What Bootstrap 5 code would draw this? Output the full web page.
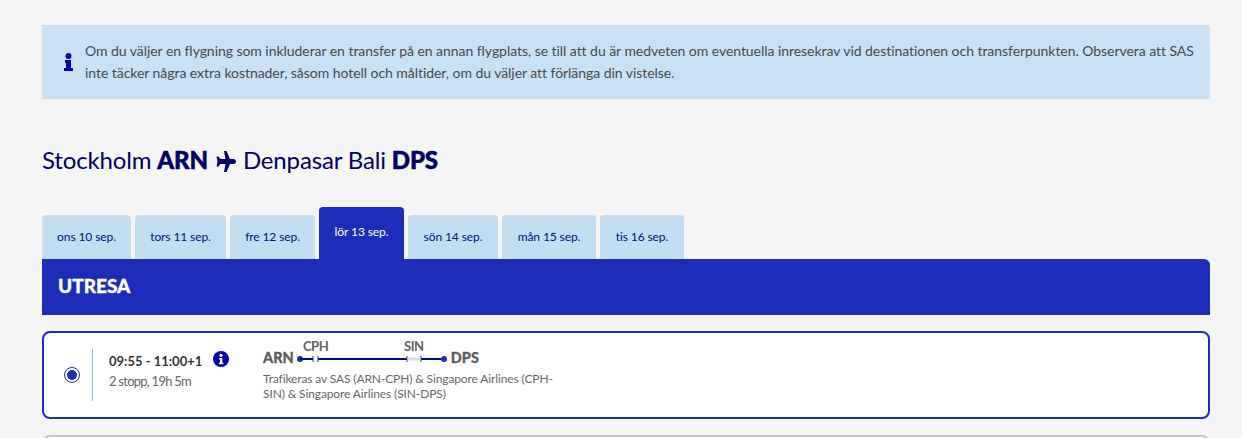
<!DOCTYPE html>
<html lang="sv">
<head>
  <meta charset="UTF-8" />
  <meta name="viewport" content="width=device-width, initial-scale=1.0"/>
  <title>Välj flyg</title>
  <link href="https://cdn.jsdelivr.net/npm/bootstrap@5.3.0/dist/css/bootstrap.min.css" rel="stylesheet"/>
  <style>
    html, body {
      height: 438px;
      overflow: hidden;
    }

    body {
      background: #f5f5f5;
      font-family: Lato, "Liberation Sans", sans-serif;
      color: #3f3f3f;
    }

    .page-wrap {
      padding: 25px 32px 0 42px;
    }

    .info-box {
      background: #c8e1f5;
      height: 74px;
      padding: 0 8px 0 22px;
      font-size: 14px;
      letter-spacing: -0.05px;
      line-height: 22px;
      color: #4a4a4a;
    }

    .info-icon {
      margin-right: 12px;
    }

    .route-title {
      margin: 47px 0 0;
      height: 30px;
      font-size: 24px;
      letter-spacing: -0.15px;
      line-height: 28px;
      font-weight: 400;
      color: #000066;
    }

    .route-title b {
      font-weight: 900;
      -webkit-text-stroke: 0.5px #000066;
    }

    .plane-icon {
      vertical-align: -3px;
      margin: 0 1px;
    }

    .day-tabs {
      margin-top: 31px;
      height: 52px;
      gap: 4px;
    }

    .day-tab {
      height: 44px;
      background: #c3def2;
      color: #000f80;
      font-size: 12px;
      letter-spacing: -0.1px;
      border-radius: 4px 4px 0 0;
    }

    .day-tab.is-active {
      height: 52px;
      background: #1c2db9;
      color: #fff;
      padding-bottom: 3px;
    }

    .tab-ons { width: 89px; }
    .tab-tors { width: 91px; }
    .tab-fre { width: 85px; }
    .tab-lor { width: 85px; }
    .tab-son { width: 90px; }
    .tab-man { width: 94px; }
    .tab-tis { width: 84px; }

    .trip-head {
      height: 56px;
      background: #1c2db9;
      color: #fff;
      padding-left: 16px;
      padding-bottom: 2px;
      font-size: 19px;
      font-weight: 900;
      -webkit-text-stroke: 0.3px #fff;
      border-radius: 0 6px 0 0;
    }

    .flight-box {
      height: 88px;
      margin-top: 16px;
      background: #fff;
      border: 2px solid #1c2db9;
      border-radius: 8px;
    }

    .flight-box.is-next {
      border-color: #c8c8c8;
    }

    .radio-cell {
      width: 49px;
      height: 52px;
      border-right: 1px solid #8fc1e3;
      padding-left: 20px;
    }

    .radio-ring {
      width: 16px;
      height: 16px;
      border: 1.5px solid #1c2db9;
      border-radius: 50%;
      padding: 2px;
    }

    .radio-ring span {
      display: block;
      width: 100%;
      height: 100%;
      background: #1c2db9;
      border-radius: 50%;
    }

    .time-cell {
      width: 170px;
      padding-left: 16px;
      padding-bottom: 8px;
    }

    .time-row {
      gap: 11px;
      height: 20px;
    }

    .time-icon {
      margin-top: -4px;
    }

    .time-line {
      font-size: 13px;
      font-weight: 700;
      color: #333;
      line-height: 20px;
    }

    .stop-line {
      font-size: 13px;
      letter-spacing: -0.75px;
      color: #666;
      line-height: 20px;
    }

    .route-cell {
      width: 300px;
      padding-bottom: 11px;
    }

    .airport {
      font-size: 14.5px;
      font-weight: 900;
      color: #5f5f5f;
      line-height: 18px;
      -webkit-text-stroke: 0.3px #5f5f5f;
    }

    .route-line {
      font-family: Lato, sans-serif;
      margin: 0 4px 0 3px;
    }

    .stop-code {
      font-size: 13px;
      font-weight: 700;
      letter-spacing: -0.5px;
      fill: #5f5f5f;
    }

    .operated {
      font-size: 12px;
      letter-spacing: -0.12px;
      line-height: 15px;
      color: #666;
    }
  </style>
</head>
<body>
  <div class="page-wrap">
    <div class="info-box d-flex align-items-center">
      <svg class="info-icon flex-shrink-0" width="9" height="18" viewBox="0 0 9 18"><circle cx="4.5" cy="3" r="3" fill="#0000a8"/><path d="M1 7h6v8h2v3H0v-3h2v-5H1z" fill="#0000a8"/></svg>
      <div>Om du väljer en flygning som inkluderar en transfer på en annan flygplats, se till att du är medveten om eventuella inresekrav vid destinationen och transferpunkten. Observera att SAS inte täcker några extra kostnader, såsom hotell och måltider, om du väljer att förlänga din vistelse.</div>
    </div>

    <h2 class="route-title">Stockholm <b>ARN</b> <svg class="plane-icon" width="21" height="21" viewBox="0 0 21 21"><path d="M9 0h2.500l3.500 8h3.500c1.400 0 2.500 1.100 2.500 2.500S19.900 13 18.500 13H15l-3.500 8H9l1.500-8H5.500l-2 2.500H1.500L2.500 10.500 1.500 5.500h2l2 2.500h5z" fill="#000066"/></svg> Denpasar Bali <b>DPS</b></h2>

    <div class="day-tabs d-flex align-items-end">
      <div class="day-tab tab-ons d-flex align-items-center justify-content-center">ons 10 sep.</div>
      <div class="day-tab tab-tors d-flex align-items-center justify-content-center">tors 11 sep.</div>
      <div class="day-tab tab-fre d-flex align-items-center justify-content-center">fre 12 sep.</div>
      <div class="day-tab tab-lor is-active d-flex align-items-center justify-content-center">lör 13 sep.</div>
      <div class="day-tab tab-son d-flex align-items-center justify-content-center">sön 14 sep.</div>
      <div class="day-tab tab-man d-flex align-items-center justify-content-center">mån 15 sep.</div>
      <div class="day-tab tab-tis d-flex align-items-center justify-content-center">tis 16 sep.</div>
    </div>

    <div class="trip-head d-flex align-items-center">UTRESA</div>

    <div class="flight-box d-flex align-items-center">
      <div class="radio-cell d-flex align-items-center flex-shrink-0"><div class="radio-ring"><span></span></div></div>
      <div class="time-cell flex-shrink-0">
        <div class="time-row d-flex align-items-center">
          <span class="time-line">09:55 - 11:00+1</span>
          <svg class="time-icon" width="16" height="16" viewBox="0 0 17 17"><circle cx="8.500" cy="8.500" r="8.500" fill="#0000a8"/><circle cx="8.500" cy="4.600" r="1.700" fill="#fff"/><path d="M6.500 7.400h3.400v5h1.100v1.600H6.200v-1.600h1.200V9H6.500z" fill="#fff"/></svg>
        </div>
        <div class="stop-line">2 stopp, 19h 5m</div>
      </div>
      <div class="route-cell flex-shrink-0">
        <div class="d-flex align-items-end">
          <span class="airport">ARN</span>
          <svg class="route-line" width="150" height="29" viewBox="0 0 150 29">
            <text class="stop-code" x="6" y="13">CPH</text>
            <text class="stop-code" x="107" y="13">SIN</text>
            <circle cx="3" cy="21" r="3" fill="#1c2db9"/>
            <path d="M3 21h13M21 21h89M124 21h23" stroke="#000f80" stroke-width="2"/>
            <path d="M16 18v6M21 18v6M110 18v6M124 18v6" stroke="#1c2db9"/>
            <path d="M110.500 21h13" stroke="#ddd" stroke-width="3"/>
            <circle cx="147" cy="21" r="3" fill="#1c2db9"/>
          </svg>
          <span class="airport">DPS</span>
        </div>
        <div class="operated mt-1">Trafikeras av SAS (ARN-CPH) &amp; Singapore Airlines (CPH-SIN) &amp; Singapore Airlines (SIN-DPS)</div>
      </div>
    </div>

    <div class="flight-box is-next"></div>
  </div>
</body>
</html>
